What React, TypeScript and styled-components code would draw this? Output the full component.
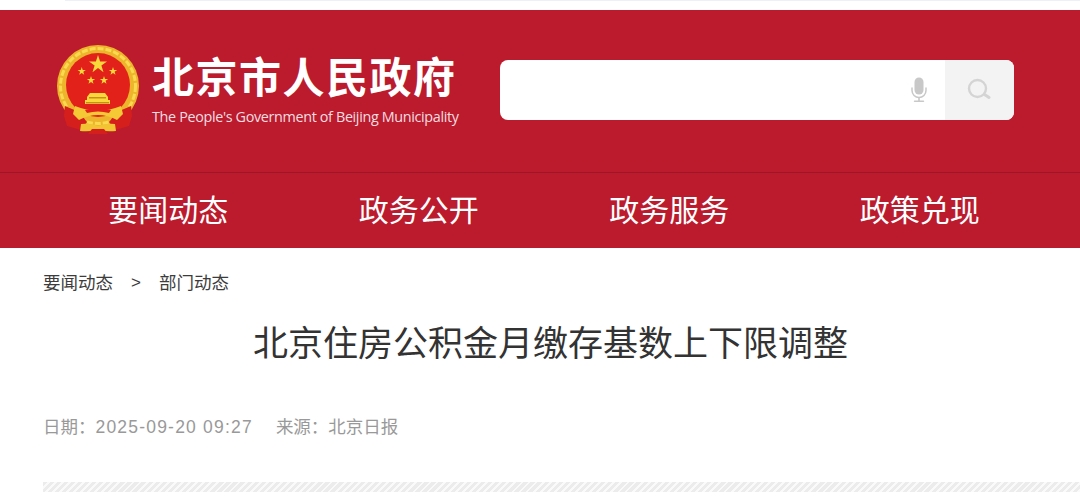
import { FC } from 'react';
import styled, { createGlobalStyle } from 'styled-components';

const GlobalStyle = createGlobalStyle`
   html, body {
      margin: 0;
      padding: 0;
      background: #fff;
   }
   body {
      font-family: "Liberation Sans", "Noto Sans CJK SC", sans-serif;
   }
`;

const Page = styled.div`
   width: 1080px;
   height: 502px;
   overflow: hidden;
   background: #fff;
`;

const TopStrip = styled.div`
   height: 10px;
   padding-left: 65px;
   &::before {
      content: '';
      display: block;
      height: 1px;
      background: #eef0f8;
   }
`;

const Banner = styled.header`
   background: #bb1b2d;
   height: 238px;
   display: flex;
   flex-direction: column;
`;

const BrandRow = styled.div`
   height: 163px;
   box-sizing: border-box;
   padding: 34px 66px 0 55px;
   display: flex;
   align-items: flex-start;
   border-bottom: 1px solid #9c1625;
`;

const Brand = styled.a`
   display: flex;
   width: 445px;
   color: #fff;
   text-decoration: none;
`;

const BrandText = styled.div`
   margin-left: 11px;
   display: flex;
   flex-direction: column;
`;

const BrandName = styled.span`
   font-family: "Noto Sans CJK SC", sans-serif;
   font-weight: 700;
   font-size: 42px;
   line-height: 46px;
   letter-spacing: 1.5px;
   margin-top: 8px;
   white-space: nowrap;
`;

const BrandEnglish = styled.span`
   font-family: "Open Sans", sans-serif;
   font-size: 14.4px;
   line-height: 20px;
   letter-spacing: -0.36px;
   margin-top: 9px;
   color: #f6dde0;
   white-space: nowrap;
`;

const SearchBox = styled.div`
   width: 514px;
   height: 60px;
   margin-top: 16px;
   background: #fff;
   border-radius: 8px;
   overflow: hidden;
   display: flex;
   justify-content: flex-end;
`;

const MicSlot = styled.div`
   width: 55px;
   display: flex;
   align-items: center;
   justify-content: flex-start;
   padding-left: 21px;
   box-sizing: border-box;
`;

const SearchButton = styled.div`
   width: 69px;
   padding-right: 2px;
   box-sizing: border-box;
   background: #f3f3f3;
   display: flex;
   align-items: center;
   justify-content: center;
`;

const Nav = styled.nav`
   flex: 1;
   padding: 0 43px 5px;
   display: grid;
   grid-template-columns: repeat(4, 250.5px);
   align-items: center;
`;

const NavItem = styled.a`
   font-family: "Noto Sans CJK SC", sans-serif;
   font-size: 30px;
   line-height: 40px;
   color: #fff;
   text-align: center;
   text-decoration: none;
`;

const Content = styled.main`
   padding: 0 0 0 43px;
`;

const Breadcrumb = styled.div`
   display: flex;
   align-items: center;
   height: 24px;
   margin-top: 21px;
   font-family: "Noto Sans CJK SC", sans-serif;
   font-size: 17.5px;
   color: #3c3c3c;
`;

const Crumb = styled.span`
   white-space: nowrap;
`;

const Separator = styled.span`
   font-family: "Liberation Sans", sans-serif;
   font-size: 17px;
   line-height: 24px;
   padding-top: 4px;
   margin: 0 18px;
`;

const Title = styled.h1`
   margin: 25px 0 0 210px;
   font-family: "Noto Sans CJK SC", sans-serif;
   font-size: 35px;
   line-height: 46px;
   font-weight: 400;
   color: #333;
   white-space: nowrap;
`;

const Meta = styled.div`
   display: flex;
   gap: 23px;
   margin-top: 49px;
   height: 24px;
   align-items: center;
   font-size: 17.5px;
   color: #999;
   white-space: nowrap;
`;

const DateValue = styled.span`
   letter-spacing: 1.2px;
`;

const Stripe = styled.div`
   height: 10px;
   margin-top: 45px;
   background: repeating-linear-gradient(
      135deg,
      #ececec 0,
      #ececec 3px,
      #fafafa 3px,
      #fafafa 5px
   );
`;

const Emblem: FC = () => (
   <svg width="86" height="92" viewBox="0 0 86 92">
      <circle cx="43" cy="42" r="41" fill="#edb52c" />
      <circle cx="43" cy="42" r="37.500" fill="none" stroke="#f9d94f" strokeWidth="3" strokeDasharray="6 2" />
      <circle cx="43" cy="41" r="32" fill="#e3211b" />
      <g fill="#f9d93a">
         <polygon points="43,11 45.100,17.500 52,17.500 46.400,21.600 48.500,28.200 43,24.100 37.500,28.200 39.600,21.600 34,17.500 40.900,17.500" />
         <polygon points="26.700,23 27.700,25.900 30.800,25.900 28.300,27.700 29.200,30.700 26.700,28.900 24.200,30.700 25.100,27.700 22.600,25.900 25.700,25.900" />
         <polygon points="58,23 59,25.900 62.100,25.900 59.600,27.700 60.500,30.700 58,28.900 55.500,30.700 56.400,27.700 53.900,25.900 57,25.900" />
         <polygon points="36,32 37,34.900 40.100,34.900 37.600,36.700 38.500,39.700 36,37.900 33.500,39.700 34.400,36.700 31.900,34.900 35,34.900" />
         <polygon points="49,32 50,34.900 53.100,34.900 50.600,36.700 51.500,39.700 49,37.900 46.500,39.700 47.400,36.700 44.900,34.900 48,34.900" />
         <path d="M35 49h15l3 4v3h2v4H30v-4h2v-3z" />
      </g>
      <path d="M34 53h17v1.500H34zM31 58h23v1.500H31z" fill="#c98f1e" />
      <path d="M10 62l14 6 8 10-6 8-14-4-3-10z" fill="#d51f1c" />
      <path d="M76 62l-14 6-8 10 6 8 14-4 3-10z" fill="#d51f1c" />
      <path d="M20 62q23 9 46 0l2 8-6 6q-19-10-38 0l-6-6z" fill="#f4c935" />
      <path d="M30 66q13-4 26 0l-2 3q-11-3-22 0z" fill="#e3211b" />
      <path d="M26 80q9-1 17 2q8-3 17-2l1 7q-9 1-18-1q-9 2-18 1z" fill="#f2c433" />
      <path d="M37 85h12l4 5H33z" fill="#d51f1c" />
   </svg>
);

const MicIcon: FC = () => (
   <svg width="16" height="26" viewBox="0 0 16 26" fill="#c8c8c8">
      <rect x="3.500" y="0.500" width="9" height="17" rx="4.500" />
      <path d="M1 10.500v3a7 7 0 0 0 14 0v-3" fill="none" stroke="#c8c8c8" strokeWidth="1.500" />
      <rect x="7.200" y="20" width="1.600" height="4" />
      <rect x="2.800" y="23.500" width="10.400" height="1.500" rx="0.700" />
   </svg>
);

const SearchIcon: FC = () => (
   <svg width="24" height="24" viewBox="0 0 24 24" fill="none" stroke="#d4d4d4">
      <circle cx="10.500" cy="10.500" r="8.500" strokeWidth="2.400" />
      <path d="M17.500 16.500l4.500 3" strokeWidth="3" strokeLinecap="round" />
   </svg>
);

const navItems = ['要闻动态', '政务公开', '政务服务', '政策兑现'];

const App: FC = () => (
   <Page>
      <GlobalStyle />
      <TopStrip />
      <Banner>
         <BrandRow>
            <Brand href="#">
               <Emblem />
               <BrandText>
                  <BrandName>北京市人民政府</BrandName>
                  <BrandEnglish>The People's Government of Beijing Municipality</BrandEnglish>
               </BrandText>
            </Brand>
            <SearchBox>
               <MicSlot><MicIcon /></MicSlot>
               <SearchButton><SearchIcon /></SearchButton>
            </SearchBox>
         </BrandRow>
         <Nav>
            {navItems.map((item) => (
               <NavItem key={item} href="#">{item}</NavItem>
            ))}
         </Nav>
      </Banner>
      <Content>
         <Breadcrumb>
            <Crumb>要闻动态</Crumb>
            <Separator>&gt;</Separator>
            <Crumb>部门动态</Crumb>
         </Breadcrumb>
         <Title>北京住房公积金月缴存基数上下限调整</Title>
         <Meta>
            <span>日期：<DateValue>2025-09-20 09:27</DateValue></span>
            <span>来源：北京日报</span>
         </Meta>
         <Stripe />
      </Content>
   </Page>
);

export default App;
